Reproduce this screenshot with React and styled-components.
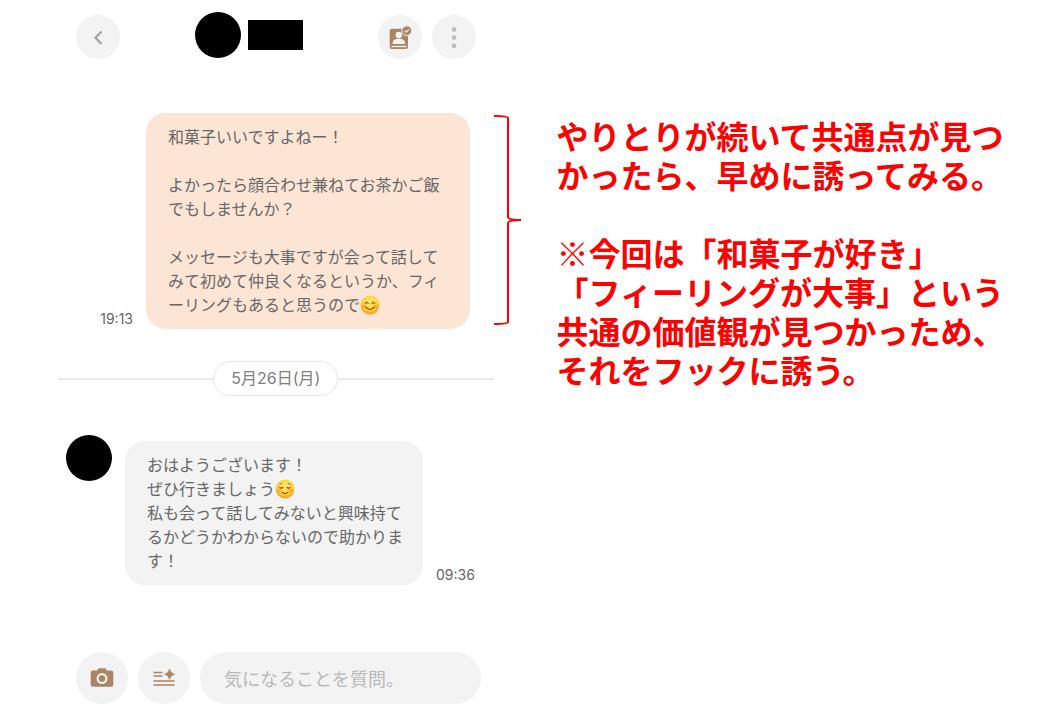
import React, { useState } from 'react';
import styled, { createGlobalStyle } from 'styled-components';

const RECEIVED = [
  'おはようございます！',
  'ぜひ行きましょう☺',
  '私も会って話してみないと興味持て',
  'るかどうかわからないので助かりま',
  'す！',
];

const SENT = [
  '和菓子いいですよねー！',
  '',
  'よかったら顔合わせ兼ねてお茶かご飯',
  'でもしませんか？',
  '',
  'メッセージも大事ですが会って話して',
  'みて初めて仲良くなるというか、フィ',
  'ーリングもあると思うので😊',
];

const NOTES = [
  'やりとりが続いて共通点が見つ',
  'かったら、早めに誘ってみる。',
  '',
  '※今回は「和菓子が好き」',
  '「フィーリングが大事」という',
  '共通の価値観が見つかっため、',
  'それをフックに誘う。',
];

// happy face, closed eyes. relaxed draws the brows of ☺
const Face = ({ relaxed }) => (
  <Emoji viewBox="0 0 20 20" role="img" aria-label={relaxed ? '☺' : '😊'}>
    <defs>
      <radialGradient id="face" cx="50%" cy="35%" r="65%">
        <stop offset="0%" stopColor="#ffec66" />
        <stop offset="65%" stopColor="#ffd036" />
        <stop offset="100%" stopColor="#f39a1c" />
      </radialGradient>
    </defs>
    <circle cx="10" cy="10" r="9.4" fill="url(#face)" />
    <ellipse cx="4.2" cy="11.4" rx="2.4" ry="1.8" fill="#f9803a" opacity="0.45" />
    <ellipse cx="15.8" cy="11.4" rx="2.4" ry="1.8" fill="#f9803a" opacity="0.45" />
    <g fill="none" stroke="#7a4a14" strokeWidth="1.1" strokeLinecap="round">
      {relaxed ? (
        <>
          <path d="M4.8 8.4q1.6 1.4 3.2 0M12 8.4q1.6 1.4 3.2 0" />
          <path d="M4.8 5.4q1-.8 2-.9M15.2 5.4q-1-.8-2-.9" strokeWidth="0.7" />
          <path d="M7.2 13.4q2.8 2.4 5.6 0" />
        </>
      ) : (
        <>
          <path d="M5.2 8.6q1.5-2.8 3 0M11.8 8.6q1.5-2.8 3 0" />
          <path d="M5.8 12.2q4.2 4.600 8.400 0" />
        </>
      )}
    </g>
  </Emoji>
);

const Lines = ({ lines }) =>
  lines.map((line, i) => (
    <Line key={i}>
      {line.replace(/[☺😊]/gu, '')}
      {line.includes('☺') && <Face relaxed />}
      {line.includes('😊') && <Face />}
    </Line>
  ));

const App = () => {
  const [text, setText] = useState('');

  return (
    <>
      <GlobalStyle />
      <Page>
        <Chat>
          <Header>
            <RoundButton aria-label="戻る">
              <Icon viewBox="0 0 24 24">
                <path
                  d="M15.5 6.5 9.5 12.7l6 6.200"
                  fill="none"
                  stroke="#a3a3a3"
                  strokeWidth="2.2"
                />
              </Icon>
            </RoundButton>
            <Profile>
              <Avatar />
              <NameMask />
            </Profile>
            <Actions>
              <RoundButton aria-label="プロフィール">
                <Icon viewBox="0 0 24 24">
                  <rect x="1.7" y="3.7" width="18.3" height="20.3" rx="2" fill="#a98563" />
                  <circle cx="10.8" cy="10" r="3.2" fill="#f3f3f3" />
                  <path d="M4.7 19v-1.4c0-2.6 3-3.8 6.1-3.8s6.1 1.2 6.1 3.8V19z" fill="#f3f3f3" />
                  <path d="M3.4 21.5h15" stroke="#f3f3f3" strokeWidth="1.3" />
                  <circle cx="18.8" cy="5.7" r="4.9" fill="#a98563" stroke="#f3f3f3" strokeWidth="1" />
                  <path d="m16.6 5.6 1.6 1.6 2.8-2.8" fill="none" stroke="#f3f3f3" strokeWidth="1.2" />
                </Icon>
              </RoundButton>
              <RoundButton aria-label="メニュー">
                <Icon viewBox="0 0 24 24" fill="#bdbdbd">
                  <circle cx="12" cy="4.4" r="2.3" />
                  <circle cx="12" cy="12.6" r="2.3" />
                  <circle cx="12" cy="20.9" r="2.3" />
                </Icon>
              </RoundButton>
            </Actions>
          </Header>

          <SentRow>
            <Time>19:13</Time>
            <Bubble $sent>
              <Lines lines={SENT} />
            </Bubble>
          </SentRow>

          <DateDivider>
            <DatePill>5月26日(月)</DatePill>
          </DateDivider>

          <ReceivedRow>
            <Avatar />
            <Bubble>
              <Lines lines={RECEIVED} />
            </Bubble>
            <Time>09:36</Time>
          </ReceivedRow>

          <Composer>
            <RoundButton $large aria-label="写真">
              <Icon viewBox="0 0 24 24">
                <path
                  d="M3 4.6h4.2l1.4-2.3h6.8l1.4 2.3H21a2.3 2.3 0 0 1 2.3 2.3v11.5a2.3 2.3 0 0 1-2.3 2.3H3a2.3 2.3 0 0 1-2.3-2.3V6.9A2.3 2.3 0 0 1 3 4.6z"
                  fill="#a98563"
                />
                <circle cx="12" cy="12.6" r="4.4" fill="none" stroke="#f3f3f3" strokeWidth="2.2" />
              </Icon>
            </RoundButton>
            <RoundButton $large aria-label="定型文">
              <Icon viewBox="0 0 24 24">
                <path
                  d="M1.5 6.500h9M1.500 10h9M1.500 15h21M1.500 19h21"
                  stroke="#a98563"
                  strokeWidth="1.7"
                />
                <path
                  d="M17.5 3q.9 4.300 5.200 5.200-4.300.9-5.200 5.200-.9-4.300-5.200-5.200 4.300-.9 5.200-5.200z"
                  fill="#a98563"
                  stroke="#a98563"
                  strokeWidth="0.6"
                />
              </Icon>
            </RoundButton>
            <MessageInput
              type="text"
              aria-label="メッセージ"
              placeholder="気になることを質問。"
              value={text}
              onChange={(ev) => setText(ev.target.value)}
            />
          </Composer>
        </Chat>

        <Bracket viewBox="0 0 28 212" aria-hidden="true">
          <path
            d="M0 2q14 0 14 2v99q0 3 13 3-13 0-13 3v99q0 2-14 2"
            fill="none"
            stroke="#ff0000"
            strokeWidth="2"
          />
        </Bracket>

        <Note>
          <Lines lines={NOTES} />
        </Note>
      </Page>
    </>
  );
};

const GlobalStyle = createGlobalStyle`
  * {
    box-sizing: border-box;
  }
  body {
    margin: 0;
    background-color: #ffffff;
    color: #666666;
    font-family: Inter, 'Noto Sans CJK JP', sans-serif;
  }
`;

const Page = styled.main`
  display: grid;
  grid-template-columns: minmax(0, 21fr) 28px minmax(0, 25fr);
  min-height: 100vh;
  padding-left: 58px;
`;

const Chat = styled.section`
  display: flex;
  flex-direction: column;
`;

const Header = styled.header`
  display: flex;
  justify-content: space-between;
  align-items: center;
  padding: 12px 18px 0;
`;

const Profile = styled.div`
  display: flex;
  align-items: center;
  gap: 7px;
  padding-bottom: 4px;
`;

const Avatar = styled.div`
  flex: none;
  width: 46px;
  height: 46px;
  border-radius: 50%;
  background-color: #000000;
`;

const NameMask = styled.div`
  width: 55px;
  height: 30px;
  background-color: #000000;
`;

const Actions = styled.div`
  display: flex;
  gap: 10px;
`;

const RoundButton = styled.button`
  display: flex;
  flex: none;
  justify-content: center;
  align-items: center;
  width: ${({ $large }) => ($large ? '52px' : '44px')};
  height: ${({ $large }) => ($large ? '52px' : '44px')};
  padding: 0;
  border: none;
  border-radius: 50%;
  background-color: #f3f3f3;
  cursor: pointer;
`;

const Icon = styled.svg`
  width: 24px;
  height: 24px;
`;

const SentRow = styled.div`
  display: flex;
  justify-content: flex-end;
  align-items: flex-end;
  gap: 13px;
  margin-top: 51px;
  padding-right: 24px;
`;

const ReceivedRow = styled.div`
  display: flex;
  align-items: flex-end;
  gap: 13px;
  margin-top: 39px;
  padding-left: 8px;

  ${Avatar} {
    align-self: flex-start;
  }
`;

const Bubble = styled.div`
  margin-top: ${({ $sent }) => ($sent ? '0' : '6px')};
  padding: 11px ${({ $sent }) => ($sent ? '30px' : '20px')} 13px 22px;
  border-radius: 20px;
  background-color: ${({ $sent }) => ($sent ? '#fde5d6' : '#f3f3f3')};
  font-family: 'Noto Sans CJK JP', sans-serif;
  font-size: 16px;
  line-height: 24px;
`;

const Line = styled.div`
  min-height: 1lh;
  white-space: nowrap;
`;

const Emoji = styled.svg`
  width: 20px;
  height: 20px;
  vertical-align: -4px;
`;

const Time = styled.time`
  font-size: 14px;
  line-height: 20px;
`;

const DateDivider = styled.div`
  display: flex;
  align-items: center;
  margin-top: 32px;

  &::before,
  &::after {
    content: '';
    flex: 1;
    height: 2px;
    background-color: #ebebeb;
  }
`;

const DatePill = styled.span`
  padding: 0 17px;
  border: 1px solid #e6e6e6;
  border-radius: 18px;
  color: #808080;
  font-size: 16px;
  line-height: 33px;
`;

const Composer = styled.div`
  display: flex;
  gap: 10px;
  margin-top: auto;
  padding: 16px 13px 16px 18px;
`;

const MessageInput = styled.input`
  flex: 1;
  min-width: 0;
  padding: 0 24px;
  border: none;
  border-radius: 26px;
  background-color: #f3f3f3;
  color: #666666;
  font-family: 'Noto Sans CJK JP', sans-serif;
  font-size: 18px;

  &::placeholder {
    color: #b8b8b8;
  }
`;

const Bracket = styled.svg`
  width: 28px;
  height: 212px;
  margin-top: 114px;
`;

const Note = styled.aside`
  padding: 116px 0 0 35px;
  color: #ff0000;
  font-family: 'Noto Sans CJK JP', sans-serif;
  font-size: 32px;
  font-weight: 700;
  line-height: 39px;
`;

export default App;
